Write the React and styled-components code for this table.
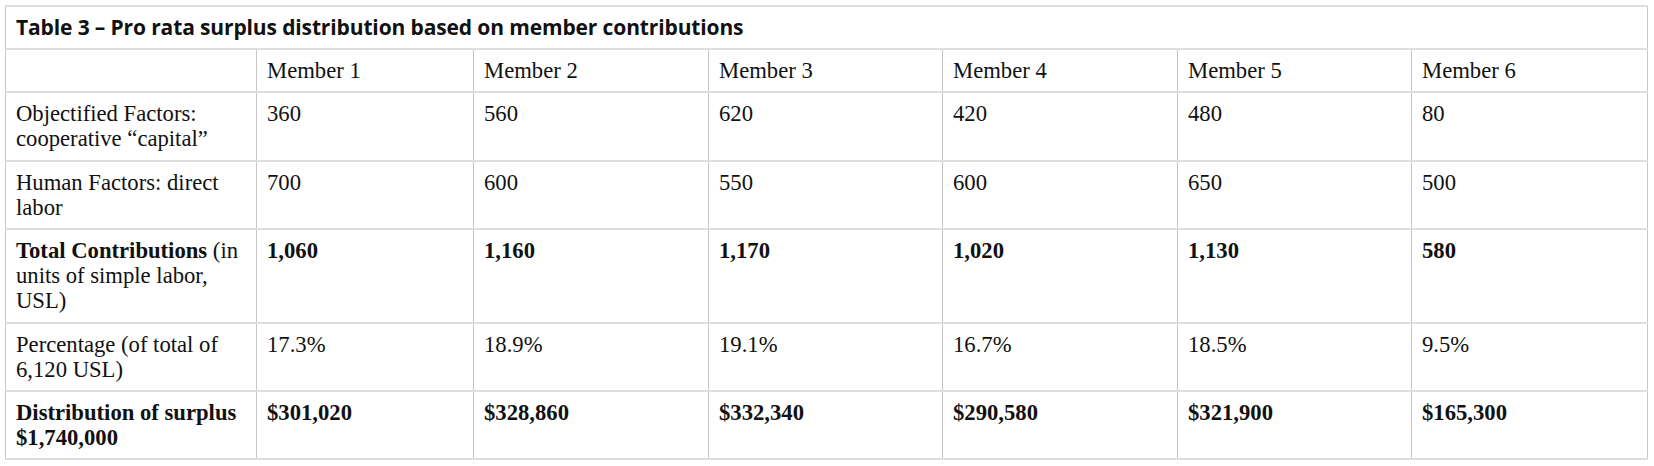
import React from "react";
import styled, { createGlobalStyle } from "styled-components";

const Global = createGlobalStyle`
  html, body { margin: 0; padding: 0; background: #fff; }
  body { font-family: "Liberation Serif", "Times New Roman", serif; color: #111; }
`;

const Page = styled.div`
  padding: 5px 7px 0 5px;
`;

const Table = styled.table`
  width: 1642px;
  border-collapse: collapse;
  table-layout: fixed;
  border-top: 2px solid #dedede;
  border-bottom: 2px solid #dedede;
  border-left: 1px solid #c6c6c6;
  border-right: 1px solid #c6c6c6;
`;

const Row = styled.tr`
  border-top: 2px solid #dedede;
  border-bottom: 2px solid #dedede;
`;

const Caption = styled.th`
  text-align: left;
  font-family: "Open Sans", "Noto Sans", sans-serif;
  font-weight: 700;
  font-size: 21px;
  line-height: 26px;
  padding: 7px 10px 8px 10px;
  color: #111;
  letter-spacing: -0.13px;
  border-left: 1px solid #c6c6c6;
  border-right: 1px solid #c6c6c6;
`;

const Cell = styled.td`
  vertical-align: top;
  text-align: left;
  font-size: 22.67px;
  line-height: 25.2px;
  padding: 8px 10px;
  font-weight: ${(p) => (p.$bold ? 700 : 400)};
  border-left: 1px solid #c6c6c6;
  border-right: 1px solid #c6c6c6;
`;

const Strong = styled.strong`
  font-weight: 700;
`;

const widths = [251, 217, 235, 234, 235, 234, 236];

const rows = [
  {
    label: <>Objectified Factors: cooperative “capital”</>,
    values: ["360", "560", "620", "420", "480", "80"],
  },
  {
    label: <>Human Factors: direct labor</>,
    values: ["700", "600", "550", "600", "650", "500"],
  },
  {
    label: (
      <>
        <Strong>Total Contributions</Strong> (in units of simple labor, USL)
      </>
    ),
    values: ["1,060", "1,160", "1,170", "1,020", "1,130", "580"],
    bold: true,
  },
  {
    label: <>Percentage (of total of 6,120 USL)</>,
    values: ["17.3%", "18.9%", "19.1%", "16.7%", "18.5%", "9.5%"],
  },
  {
    label: (
      <>
        <Strong>Distribution of surplus $1,740,000</Strong>
      </>
    ),
    values: ["$301,020", "$328,860", "$332,340", "$290,580", "$321,900", "$165,300"],
    bold: true,
  },
];

export default function App() {
  return (
    <Page>
      <Global />
      <Table>
        <colgroup>
          {widths.map((w, i) => (
            <col key={i} style={{ width: w }} />
          ))}
        </colgroup>
        <tbody>
          <Row>
            <Caption colSpan={7}>
              Table 3 – Pro rata surplus distribution based on member contributions
            </Caption>
          </Row>
          <Row>
            <Cell />
            {[1, 2, 3, 4, 5, 6].map((n) => (
              <Cell key={n}>Member {n}</Cell>
            ))}
          </Row>
          {rows.map((r, i) => (
            <Row key={i}>
              <Cell>{r.label}</Cell>
              {r.values.map((v, j) => (
                <Cell key={j} $bold={r.bold}>
                  {v}
                </Cell>
              ))}
            </Row>
          ))}
        </tbody>
      </Table>
    </Page>
  );
}
